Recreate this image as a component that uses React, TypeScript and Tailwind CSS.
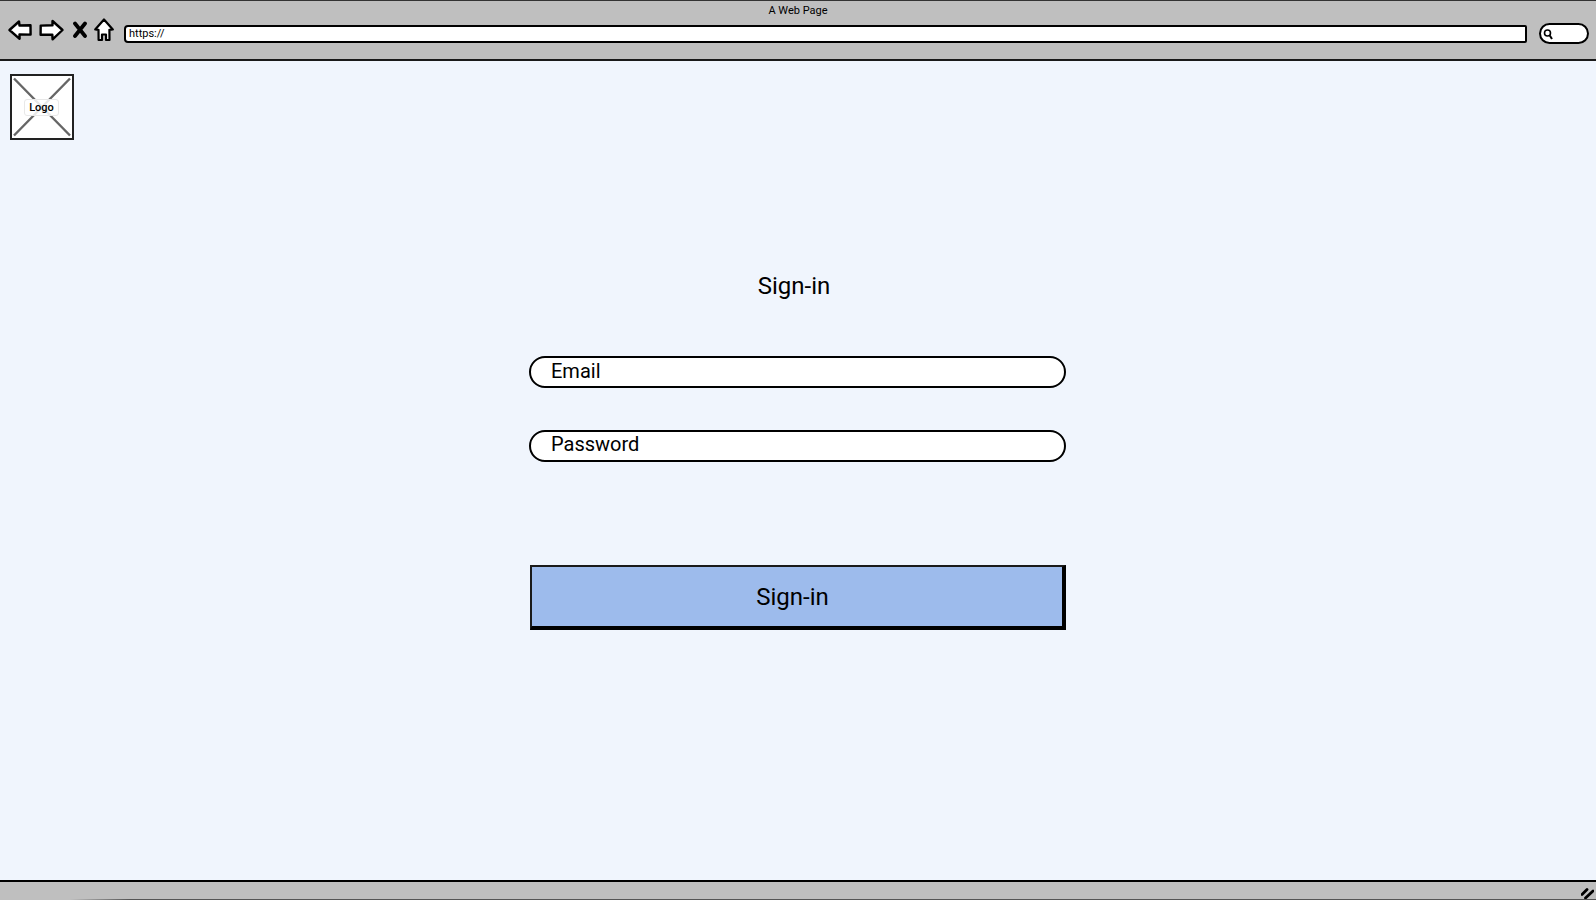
import React from "react";

function Back() {
  return (
    <svg width="24" height="24" viewBox="0 0 24 24" className="shrink-0">
      <path d="M1.5 12 L11 3.5 L11.5 7.5 L22.5 7.3 L22.6 16.6 L11.5 16.5 L11.6 20.8 Z" fill="#fff" stroke="#000" strokeWidth="2.4" strokeLinejoin="round" />
    </svg>
  );
}
function Forward() {
  return (
    <svg width="25" height="24" viewBox="0 0 25 24" className="shrink-0">
      <path d="M23.5 12 L13.5 3 L13.5 7.3 L1.7 7.6 L1.6 16.8 L13.3 16.6 L13.6 21.3 Z" fill="#fff" stroke="#000" strokeWidth="2.4" strokeLinejoin="round" />
    </svg>
  );
}
function Close() {
  return (
    <svg width="16" height="18" viewBox="0 0 16 18" className="shrink-0">
      <path d="M3 2.5 L13 15 M13 2.5 L3 15" fill="none" stroke="#000" strokeWidth="3.8" strokeLinecap="round" />
    </svg>
  );
}
function Home() {
  return (
    <svg width="20" height="24" viewBox="0 0 20 24" className="shrink-0">
      <path d="M10 1.5 L18.8 11.5 L15.4 11.8 L15.5 22 L12 22 L12 16.5 L8 16.5 L8 22 L4.6 22 L4.5 11.8 L1.2 11.5 Z" fill="#fff" stroke="#000" strokeWidth="2.2" strokeLinejoin="round" />
    </svg>
  );
}
function Lens() {
  return (
    <svg width="11" height="12" viewBox="0 0 11 12" className="shrink-0">
      <circle cx="4.5" cy="5" r="3" fill="none" stroke="#000" strokeWidth="1.6" />
      <path d="M6.8 7.5 L9 11" stroke="#000" strokeWidth="2" />
    </svg>
  );
}
function LogoCross() {
  return (
    <svg viewBox="0 0 60 61" className="absolute inset-0 w-full h-full">
      <path d="M2 2 L58 59 M58 2 L2 59" stroke="#666" strokeWidth="2.4" fill="none" />
    </svg>
  );
}
function Grip() {
  return (
    <svg width="13" height="11" viewBox="0 0 13 11" className="shrink-0">
      <path d="M1 6.5 L6 1.5 M4.5 10 L12 3" stroke="#000" strokeWidth="2.8" strokeLinecap="round" fill="none" />
    </svg>
  );
}

export default function App() {
  return (
    <div className="w-[1596px] h-[900px] overflow-hidden flex flex-col bg-[#f0f5fd] text-black font-['Roboto','Noto_Sans',sans-serif]">
      <header className="h-[61px] shrink-0 flex flex-col bg-[#bfbfbf] border-t border-t-[#333] border-b-2 border-b-[#1a1a1a]">
        <div className="h-[17px] mt-[1px] flex items-center justify-center text-[11px] leading-none">A Web Page</div>
        <div className="flex items-center pl-[8px] pr-[7px] mt-[-1px]">
          <div className="flex items-center -translate-y-[1px]">
            <Back />
            <div className="w-[7px]" />
            <Forward />
            <div className="w-[8px]" />
            <Close />
            <div className="w-[6px]" />
            <Home />
          </div>
          <div className="w-[10px]" />
          <div className="flex-1 h-[18px] mt-[6px] bg-white border-2 border-black rounded-l-[4px] rounded-r-[2px] flex items-center pl-[3px] pb-[1px] text-[11px] leading-none">https://</div>
          <div className="w-[12px]" />
          <div className="w-[50px] h-[21px] mt-[5px] bg-white border-2 border-black rounded-full flex items-center pl-[2px]">
            <Lens />
          </div>
        </div>
      </header>

      <main className="flex-1 relative flex flex-col pl-[10px] pt-[13px]">
        <div className="relative w-[64px] h-[66px] bg-white border-[2.5px] border-[#222] flex items-center justify-center">
          <LogoCross />
          <span className="relative mr-[1px] px-[4px] h-[17px] flex items-center bg-white/85 border border-[#e8e8e8] rounded-[3px] text-[11px] font-medium leading-none">Logo</span>
        </div>

        <div className="w-[537px] ml-[519px] mt-[130px] flex flex-col">
          <h1 className="h-[32px] flex items-center justify-center pr-[7px] text-[24px] font-[450] leading-none">Sign-in</h1>
          <div className="mt-[54px] h-[32px] bg-white border-2 border-black rounded-[16px] flex items-center pl-[20px] text-[20px] font-[450] leading-none pb-[3px]">Email</div>
          <div className="mt-[42px] h-[32px] bg-white border-2 border-black rounded-[16px] flex items-center pl-[20px] text-[20px] font-[450] leading-none pb-[4px]">Password</div>
          <button className="mt-[103px] ml-[1px] w-[536px] h-[65px] bg-[#9dbbec] border-l-2 border-t-2 border-[#1a1a1a] border-r-4 border-b-4 border-r-black border-b-black flex items-center justify-center pr-[9px] text-[24px] font-[450] leading-none">Sign-in</button>
        </div>
      </main>

      <footer className="h-[20px] shrink-0 bg-[#bfbfbf] border-t-2 border-t-black flex flex-col">
        <div className="flex-1 min-h-0 flex items-center justify-end pr-[2px] pt-[5px]">
          <Grip />
        </div>
        <div className="h-px ml-[70px] bg-[linear-gradient(to_right,transparent,#555_60px)]" />
      </footer>
    </div>
  );
}
